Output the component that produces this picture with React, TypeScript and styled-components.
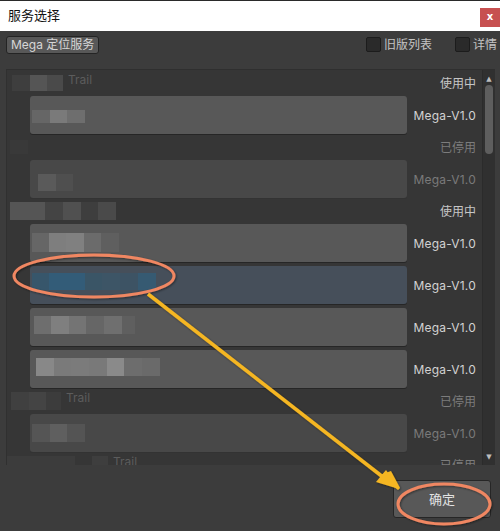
import React from "react";
import styled, { createGlobalStyle } from "styled-components";

const GlobalStyle = createGlobalStyle`
  html, body {
    margin: 0;
    padding: 0;
    background: #3c3c3c;
  }
  body {
    font-family: "Inter", "Noto Sans CJK SC", sans-serif;
  }
`;

type Cell = [number, string];

type Item = {
  kind: "item";
  cells: Cell[];
  cellTop: number;
  cellHeight: number;
  disabled?: boolean;
  selected?: boolean;
};

type Header = {
  kind: "header";
  cells: Cell[];
  left: number;
  height: number;
  trail?: boolean;
  status: string;
  active?: boolean;
};

const rows: (Item | Header)[] = [
  {
    kind: "header",
    left: 1,
    height: 16,
    cells: [[18, "#3e3e3e"], [17, "#555555"], [16, "#4a4a4a"]],
    trail: true,
    status: "使用中",
    active: true,
  },
  {
    kind: "item",
    cellTop: 14,
    cellHeight: 13,
    cells: [[18, "#666666"], [17, "#7a7a7a"], [18, "#6e6e6e"]],
  },
  {
    kind: "header",
    left: -1,
    height: 14,
    cells: [[18, "#393939"]],
    status: "已停用",
  },
  {
    kind: "item",
    cellTop: 14,
    cellHeight: 17,
    disabled: true,
    cells: [[6, "transparent"], [18, "#5a5a5a"], [17, "#4f4f4f"]],
  },
  {
    kind: "header",
    left: -1,
    height: 18,
    cells: [
      [35, "#555555"],
      [18, "#444444"],
      [18, "#505050"],
      [17, "#3e3e3e"],
      [18, "#4a4a4a"],
    ],
    status: "使用中",
    active: true,
  },
  {
    kind: "item",
    cellTop: 9,
    cellHeight: 19,
    cells: [
      [17, "#666666"],
      [17, "#7e7e7e"],
      [18, "#808080"],
      [17, "#6b6b6b"],
      [18, "#5f5f5f"],
    ],
  },
  {
    kind: "item",
    cellTop: 7,
    cellHeight: 17,
    selected: true,
    cells: [
      [17, "#37566b"],
      [36, "#335c78"],
      [17, "#3a5566"],
      [18, "#3d5566"],
      [18, "#3d5364"],
      [18, "#365a72"],
    ],
  },
  {
    kind: "item",
    cellTop: 8,
    cellHeight: 18,
    cells: [
      [2, "transparent"],
      [17, "#6e6e6e"],
      [18, "#7f7f7f"],
      [17, "#747474"],
      [18, "#666666"],
      [18, "#6f6f6f"],
      [13, "#5f5f5f"],
    ],
  },
  {
    kind: "item",
    cellTop: 8,
    cellHeight: 18,
    cells: [
      [4, "transparent"],
      [18, "#888888"],
      [17, "#7a7a7a"],
      [18, "#7b7b7b"],
      [18, "#797979"],
      [17, "#8a8a8a"],
      [18, "#6d6d6d"],
      [18, "#6a6a6a"],
    ],
  },
  {
    kind: "header",
    left: 0,
    height: 18,
    cells: [[18, "#404040"], [17, "#444444"], [15, "#3c3c3c"]],
    trail: true,
    status: "已停用",
  },
  {
    kind: "item",
    cellTop: 10,
    cellHeight: 18,
    disabled: true,
    cells: [[18, "#555555"], [17, "#5f5f5f"], [18, "#545454"]],
  },
  {
    kind: "header",
    left: -7,
    height: 18,
    cells: [[71, "#3c3c3c"], [17, "#363636"], [16, "#3e3e3e"]],
    trail: true,
    status: "已停用",
  },
];

export default function App() {
  return (
    <>
      <GlobalStyle />
      <Window>
        <TitleBar>
          <Title>服务选择</Title>
          <CloseButton>x</CloseButton>
        </TitleBar>
        <Toolbar>
          <ToolButton>Mega 定位服务</ToolButton>
          <Spacer />
          <CheckLabel>
            <CheckBox />
            旧版列表
          </CheckLabel>
          <CheckLabel>
            <CheckBox />
            详情
          </CheckLabel>
        </Toolbar>
        <ListFrame>
          <ListContent>
            {rows.map((row, i) =>
              row.kind === "header" ? (
                <HeaderRow key={i}>
                  <Mosaic $left={row.left} $height={row.height}>
                    {row.cells.map(([w, c], j) => (
                      <MosaicCell key={j} $w={w} $c={c} />
                    ))}
                  </Mosaic>
                  {row.trail && <TrailText>Trail</TrailText>}
                  <Status $active={row.active}>{row.status}</Status>
                </HeaderRow>
              ) : (
                <ItemRow key={i}>
                  <ItemBox $disabled={row.disabled} $selected={row.selected}>
                    <Mosaic $left={2} $height={row.cellHeight} $top={row.cellTop}>
                      {row.cells.map(([w, c], j) => (
                        <MosaicCell key={j} $w={w} $c={c} />
                      ))}
                    </Mosaic>
                  </ItemBox>
                  <Version $disabled={row.disabled}>Mega-V1.0</Version>
                </ItemRow>
              )
            )}
          </ListContent>
          <ScrollTrack>
            <Arrow $up>▲</Arrow>
            <Thumb />
            <TrackFill />
            <Arrow>▼</Arrow>
          </ScrollTrack>
        </ListFrame>
        <Footer>
          <ConfirmButton>确定</ConfirmButton>
        </Footer>
        <Annotations width="500" height="531" viewBox="0 0 500 531">
          <defs>
            <filter id="sh" x="-10%" y="-10%" width="120%" height="120%">
              <feDropShadow dx="1" dy="1" stdDeviation="0.8" floodColor="#000" floodOpacity="0.45" />
            </filter>
          </defs>
          <g filter="url(#sh)">
            <ellipse cx="94" cy="276" rx="80" ry="21" fill="none" stroke="#f08762" strokeWidth="3" />
            <ellipse cx="444" cy="504" rx="46" ry="20" fill="none" stroke="#f08762" strokeWidth="3" />
            <line x1="148" y1="294" x2="388" y2="481" stroke="#f5b622" strokeWidth="3.5" />
            <polygon points="398,490 380,475 391,471 400,488" fill="#f5b622" />
            <polygon points="399,489 376,482 386,470" fill="#f5b622" />
          </g>
        </Annotations>
      </Window>
    </>
  );
}

const Window = styled.div`
  position: relative;
  width: 500px;
  height: 531px;
  display: flex;
  flex-direction: column;
  background: #3c3c3c;
  overflow: hidden;
`;

const TitleBar = styled.div`
  height: 30px;
  flex: none;
  background: #ffffff;
  border-top: 1px solid #2a2a2a;
  display: flex;
  align-items: flex-start;
  padding-left: 8px;
`;

const Title = styled.div`
  font-family: "Noto Sans CJK SC", sans-serif;
  font-size: 13px;
  line-height: 14px;
  margin-top: 7px;
  color: #111111;
  flex: 1;
`;

const CloseButton = styled.div`
  width: 20px;
  height: 19px;
  margin-top: 7px;
  background: #c75050;
  color: #ffffff;
  font-family: "DejaVu Sans", sans-serif;
  font-weight: bold;
  font-size: 10px;
  line-height: 17px;
  text-align: center;
`;

const Toolbar = styled.div`
  height: 38px;
  flex: none;
  display: flex;
  align-items: flex-start;
  padding: 5px 3px 0 6px;
  box-sizing: border-box;
`;

const ToolButton = styled.div`
  height: 18px;
  box-sizing: border-box;
  padding: 0 4px;
  background: #585858;
  border: 1px solid #242424;
  border-radius: 3px;
  color: #d6d6d6;
  font-size: 12px;
  line-height: 16px;
  white-space: nowrap;
`;

const Spacer = styled.div`
  flex: 1;
`;

const CheckLabel = styled.div`
  display: flex;
  align-items: center;
  gap: 3px;
  margin-left: 23px;
  color: #c4c4c4;
  font-family: "Noto Sans CJK SC", sans-serif;
  font-size: 12px;
  line-height: 16px;
  height: 16px;
`;

const CheckBox = styled.div`
  width: 13px;
  height: 13px;
  background: #2a2a2a;
  border: 1px solid #1c1c1c;
  border-radius: 2px;
`;

const ListFrame = styled.div`
  height: 396px;
  flex: none;
  margin: 0 5px 0 6px;
  display: flex;
  background: #363636;
  border-top: 1px solid #2f2f2f;
  border-left: 1px solid #303030;
  box-sizing: border-box;
  overflow: hidden;
`;

const ListContent = styled.div`
  flex: 1;
  padding-left: 4px;
  padding-right: 6px;
  display: flex;
  flex-direction: column;
`;

const HeaderRow = styled.div`
  height: 26px;
  flex: none;
  display: flex;
  align-items: center;
`;

const Mosaic = styled.div<{ $left: number; $height: number; $top?: number }>`
  display: flex;
  height: ${(p) => p.$height}px;
  margin-left: ${(p) => p.$left}px;
  margin-top: ${(p) => (p.$top !== undefined ? p.$top + "px" : "0")};
  flex: none;
`;

const MosaicCell = styled.div<{ $w: number; $c: string }>`
  width: ${(p) => p.$w}px;
  height: 100%;
  background: ${(p) => p.$c};
`;

const TrailText = styled.div`
  margin-left: 5px;
  color: #5c5c5c;
  font-size: 12px;
  margin-top: -8px;
`;

const Status = styled.div<{ $active?: boolean }>`
  margin-left: auto;
  margin-top: -2px;
  font-family: "Noto Sans CJK SC", sans-serif;
  font-size: 12px;
  color: ${(p) => (p.$active ? "#c6c6c6" : "#7c7c7c")};
`;

const ItemRow = styled.div`
  height: 38px;
  flex: none;
  display: flex;
  align-items: center;
  & + & {
    margin-top: 4px;
  }
`;

const ItemBox = styled.div<{ $disabled?: boolean; $selected?: boolean }>`
  width: 377px;
  height: 38px;
  margin-left: 19px;
  box-sizing: border-box;
  border-radius: 3px;
  align-self: flex-start;
  background: ${(p) => (p.$selected ? "#464f5a" : p.$disabled ? "#484848" : "#585858")};
  box-shadow: 0 1px 0 ${(p) => (p.$disabled ? "#333333" : "#262626")};
  overflow: hidden;
`;

const Version = styled.div<{ $disabled?: boolean }>`
  margin-left: auto;
  font-size: 12px;
  letter-spacing: 0.2px;
  color: ${(p) => (p.$disabled ? "#7a7a7a" : "#d2d2d2")};
`;

const ScrollTrack = styled.div`
  width: 12px;
  flex: none;
  background: #303030;
  display: flex;
  flex-direction: column;
  align-items: center;
  border-left: 1px solid #2b2b2b;
`;

const Arrow = styled.div<{ $up?: boolean }>`
  font-family: "DejaVu Sans", sans-serif;
  font-size: 7px;
  line-height: 8px;
  color: #bdbdbd;
  margin-top: ${(p) => (p.$up ? "5px" : "0")};
  margin-bottom: ${(p) => (p.$up ? "2px" : "4px")};
`;

const Thumb = styled.div`
  width: 8px;
  height: 69px;
  border-radius: 4px;
  background: #5e5e5e;
`;

const TrackFill = styled.div`
  flex: 1;
`;

const Footer = styled.div`
  flex: 1;
  display: flex;
  justify-content: flex-end;
  align-items: flex-start;
  padding: 15px 9px 0 0;
`;

const ConfirmButton = styled.div`
  width: 98px;
  height: 38px;
  box-sizing: border-box;
  background: #585858;
  border: 1px solid #262626;
  border-radius: 3px;
  color: #e2e2e2;
  font-family: "Noto Sans CJK SC", sans-serif;
  font-size: 13px;
  line-height: 36px;
  text-align: center;
`;

const Annotations = styled.svg`
  position: absolute;
  left: 0;
  top: 0;
  pointer-events: none;
`;
